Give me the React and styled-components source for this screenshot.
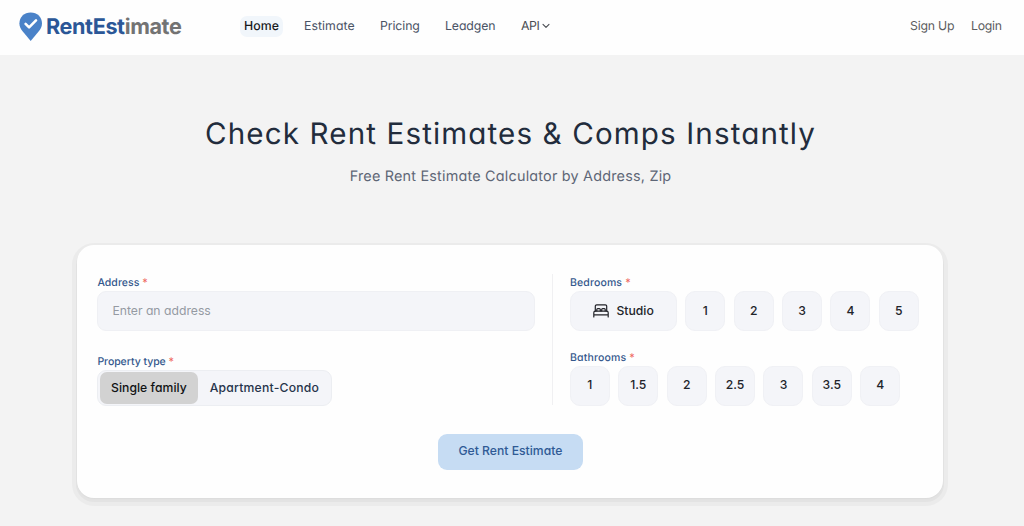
import React from "react";
import styled, { createGlobalStyle } from "styled-components";

const Global = createGlobalStyle`
  * { box-sizing: border-box; }
  body {
    margin: 0;
    background: #f3f3f3;
    font-family: Inter, "Open Sans", sans-serif;
    font-feature-settings: "cv11";
    color: #222b3a;
    text-rendering: geometricPrecision;
  }
  button, input { font: inherit; font-feature-settings: inherit; margin: 0; }
`;

const Page = styled.div`
  height: 526px;
  overflow: hidden;
`;

const Header = styled.header`
  height: 55px;
  padding: 0 15px 3px 19px;
  display: flex;
  align-items: center;
  background: #fefefe;
`;

const Logo = styled.a`
  display: flex;
  align-items: center;
  width: 221px;
  padding-top: 1px;
  color: #2b5797;
  font-size: 21.6px;
  font-weight: 650;
  letter-spacing: -0.38px;
  line-height: 30px;
  font-feature-settings: normal;

  svg { margin-right: 3px; flex: none; }
  span { color: #737373; }
`;

const Nav = styled.nav`
  display: flex;
  align-items: center;
  flex: 1;
`;

const NavLink = styled.a`
  display: flex;
  align-items: center;
  height: 21px;
  padding-bottom: 1px;
  width: ${(p) => p.$width}px;
  font-size: 12.3px;
  font-weight: 430;
  letter-spacing: ${(p) => p.$track || 0}px;
  color: ${(p) => p.$color || "#4a5365"};
  white-space: nowrap;

  svg { margin-left: 3px; }
`;

const ActiveLink = styled(NavLink)`
  justify-content: center;
  margin-right: 21px;
  border-radius: 7px;
  background: #f1f6fb;
  color: #18191c;
  font-weight: 540;
`;

const Account = styled.div`
  display: flex;
`;

const Hero = styled.section`
  padding: 59px 3px 0 0;
  text-align: center;
`;

const Title = styled.h1`
  margin: 0;
  font-size: 29.6px;
  line-height: 40px;
  font-weight: 420;
  letter-spacing: 1.12px;
  color: #222c3c;
`;

const Subtitle = styled.p`
  margin: 13px 0 0;
  font-size: 14.4px;
  line-height: 20px;
  letter-spacing: 0.2px;
  color: #5e6676;
`;

const Card = styled.main`
  width: 866px;
  height: 253px;
  margin: 58px 0 0 77.4px;
  padding: 29px 24px 0 20px;
  border-radius: 17px;
  background: #fefefe;
  box-shadow: 0 1px 1px #dcdcdc, 0 3px 0 1px #e3e3e3, 0 3px 0 5px #ebebeb;
`;

const Columns = styled.div`
  display: flex;
  height: 131px;
`;

const Left = styled.div`
  width: 455.5px;
  padding: 0 18px 0 0;
  border-right: 1px solid #f0f0f2;
`;

const Right = styled.div`
  padding-left: 17px;
`;

const Label = styled.div`
  height: 17px;
  line-height: 18px;
  margin-top: ${(p) => p.$top || 0}px;
  font-size: 10.5px;
  font-weight: 550;
  letter-spacing: ${(p) => p.$track || 0}px;
  color: #34588c;

  span { color: #ef6a62; }
`;

const AddressInput = styled.input`
  display: block;
  width: 438px;
  height: 40px;
  padding: 0 15px 2px 14px;
  border: 1px solid #eff0f4;
  border-radius: 9px;
  background: #f4f5f9;
  font-size: 12.2px;

  &::placeholder { color: #959aa3; opacity: 1; }
`;

const Segmented = styled.div`
  display: flex;
  width: 235px;
  height: 36px;
  padding: 1px 1px 1px 1.5px;
  border: 1px solid #eceef2;
  border-radius: 9px;
  background: #f4f5f9;
`;

const Segment = styled.button`
  width: ${(p) => p.$width}px;
  flex: none;
  height: 32px;
  padding: 0 0 2px;
  border: 0;
  border-radius: 7px;
  background: ${(p) => (p.$on ? "#d2d2d2" : "transparent")};
  color: ${(p) => (p.$on ? "#111214" : "#26344b")};
  font-size: 12.2px;
  font-weight: 540;
  letter-spacing: ${(p) => p.$track}px;
`;

const Options = styled.div`
  display: flex;
  gap: 8.4px;
`;

const Option = styled.button`
  display: flex;
  align-items: center;
  justify-content: center;
  gap: 7.5px;
  flex: none;
  width: ${(p) => (p.$wide ? 107 : 40)}px;
  height: 40px;
  padding: 0 0 2px;
  border: 1px solid #f0f1f5;
  border-radius: 10px;
  background: #f4f5f9;
  color: #22242a;
  font-size: 12.2px;
  font-weight: ${(p) => (p.$wide ? 450 : 500)};

  svg { margin-top: 2px; }
`;

const Submit = styled.button`
  display: block;
  width: 145px;
  height: 35.5px;
  margin: 29px 0 0 340.5px;
  padding: 0 0 2px;
  border: 0;
  border-radius: 9px;
  background: #c6dcf3;
  color: #2f5a95;
  font-size: 12.2px;
  font-weight: 540;
`;

const Pin = () => (
  <svg width="24" height="30" viewBox="0 0 24 30">
    <path d="M11.7 0.5C5.2 0.5 0.4 5.2 0.4 11.4c0 3.2 1.4 5.6 3.4 8.2l7.9 9.4 7.9-9.4c2-2.6 3.4-5 3.4-8.2C23 5.2 18.2 0.5 11.7 0.5z" fill="#4a82c8" />
    <path d="M6.6 11.8l3.5 3.5 6.9-6.9" fill="none" stroke="#fff" strokeWidth="2.6" strokeLinecap="round" strokeLinejoin="round" />
  </svg>
);

const Chevron = () => (
  <svg width="8" height="6" viewBox="0 0 8 6" fill="none" stroke="#4a4d53" strokeWidth="1.1" strokeLinecap="round" strokeLinejoin="round">
    <path d="M1 1.3l3 3 3-3" />
  </svg>
);

const Bed = () => (
  <svg width="16" height="14" viewBox="0 0 16 14" fill="none" stroke="#222329" strokeWidth="1.2" strokeLinejoin="round" strokeLinecap="round">
    <path d="M2.3 7.2V2.2a1.4 1.4 0 0 1 1.4-1.4h8.6a1.4 1.4 0 0 1 1.4 1.4v5" />
    <path d="M0.8 13V8.7a1.5 1.5 0 0 1 1.5-1.5h11.4a1.5 1.5 0 0 1 1.5 1.5V13M0.8 10.8h14.4" />
    <path d="M3.8 7V5.5a.9.9 0 0 1 .9-.9h1.7a.9.9 0 0 1 .9.9V7M8.7 7V5.5a.9.9 0 0 1 .9-.9h1.7a.9.9 0 0 1 .9.9V7" />
  </svg>
);

export default function App() {
  return (
    <Page>
      <Global />
      <Header>
        <Logo><Pin />RentEst<span>imate</span></Logo>
        <Nav>
          <ActiveLink $width={43} $track={0.1}>Home</ActiveLink>
          <NavLink $width={76} $track={0.05}>Estimate</NavLink>
          <NavLink $width={65} $track={-0.1}>Pricing</NavLink>
          <NavLink $width={76} $track={-0.1}>Leadgen</NavLink>
          <NavLink $width={40} $track={-0.4} $color="#4a4d53">API<Chevron /></NavLink>
        </Nav>
        <Account>
          <NavLink $width={61} $track={-0.22} $color="#5c5d60">Sign Up</NavLink>
          <NavLink $width={38} $track={-0.3} $color="#5c5d60">Login</NavLink>
        </Account>
      </Header>
      <Hero>
        <Title>Check Rent Estimates &amp; Comps Instantly</Title>
        <Subtitle>Free Rent Estimate Calculator by Address, Zip</Subtitle>
      </Hero>
      <Card>
        <Columns>
          <Left>
            <Label $track={0.05}>Address <span>*</span></Label>
            <AddressInput placeholder="Enter an address" />
            <Label $top={22} $track={-0.05}>Property type <span>*</span></Label>
            <Segmented>
              <Segment $on $width={98} $track={0.05}>Single family</Segment>
              <Segment $width={133} $track={0.22}>Apartment-Condo</Segment>
            </Segmented>
          </Left>
          <Right>
            <Label $track={0.15}>Bedrooms <span>*</span></Label>
            <Options>
              <Option $wide><Bed />Studio</Option>
              {["1", "2", "3", "4", "5"].map((n) => <Option key={n}>{n}</Option>)}
            </Options>
            <Label $top={17.5} $track={0.18}>Bathrooms <span>*</span></Label>
            <Options>
              {["1", "1.5", "2", "2.5", "3", "3.5", "4"].map((n) => <Option key={n}>{n}</Option>)}
            </Options>
          </Right>
        </Columns>
        <Submit>Get Rent Estimate</Submit>
      </Card>
    </Page>
  );
}
